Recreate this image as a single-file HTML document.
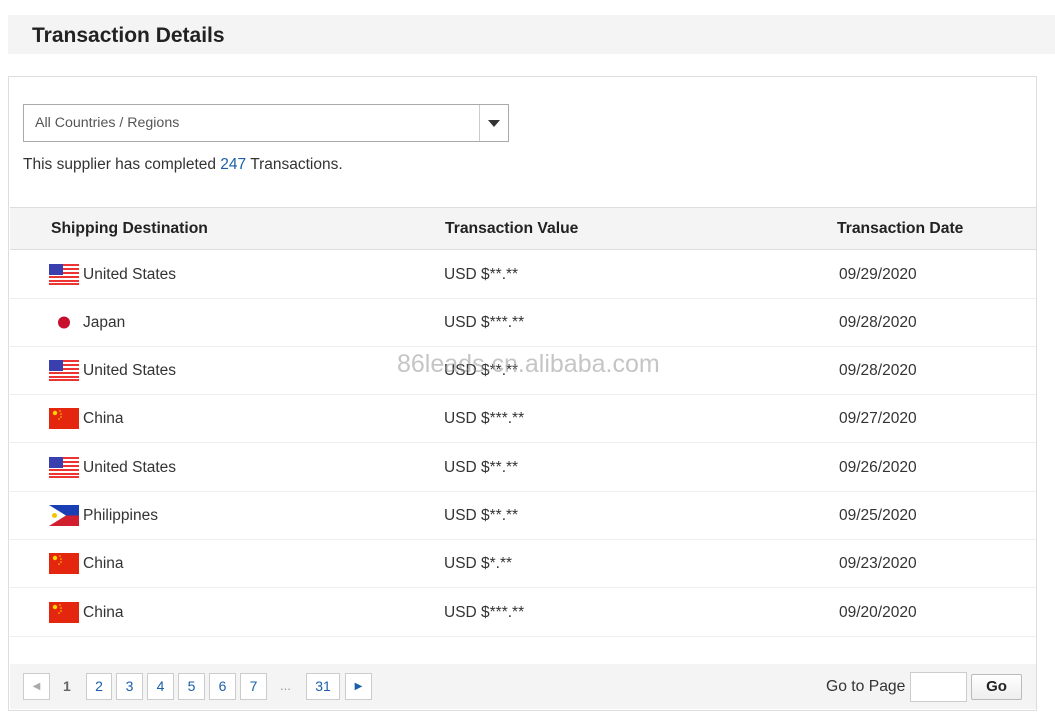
<!DOCTYPE html>
<html><head><meta charset="utf-8"><style>
*{margin:0;padding:0;box-sizing:border-box}
body{width:1055px;height:725px;background:#fff;font-family:"Liberation Sans",Arial,sans-serif;color:#333;position:relative;overflow:hidden}
.abs{position:absolute}
.hdr{left:8px;top:15px;width:1047px;height:39px;background:#f4f4f4}
.hdr span{position:absolute;left:24px;top:9px;font-size:21px;font-weight:bold;color:#222}
.card{left:8px;top:76px;width:1029px;height:635px;border:1px solid #ddd}
.sel{left:23px;top:104px;width:486px;height:38px;border:1px solid #aaa;background:#fff}
.sel span{position:absolute;left:11px;top:10px;font-size:14.2px;color:#555}
.sel i{position:absolute;right:0;top:0;width:29px;height:36px;border-left:1px solid #ccc}
.sel i:after{content:"";position:absolute;left:8px;top:15px;border-left:6px solid transparent;border-right:6px solid transparent;border-top:7px solid #333}
.info{left:23px;top:156px;font-size:15.5px;color:#333}
.info b{font-weight:normal;color:#1a5fa8}
.th{left:10px;top:207px;width:1026px;height:43px;background:#f4f4f4;border-top:1px solid #ddd;border-bottom:1px solid #ddd}
.th span{position:absolute;top:12px;font-size:15.7px;font-weight:bold;color:#222}
.row{left:10px;width:1026px;height:49px;border-bottom:1px solid #eee}
.row span{position:absolute;top:16px;font-size:15.5px;color:#333}
.flag{position:absolute;left:39px;top:14px;width:30px;height:21px}
.pg{left:10px;top:664px;width:1026px;height:45px;background:#f4f4f4}
.b{position:absolute;top:673px;height:27px;border:1px solid #ccc;background:#fff;color:#1a5fa8;font-size:14px;text-align:center;line-height:25px}
.wm{left:397px;top:350px;font-size:25px;color:rgba(150,150,150,.55)}
</style></head><body>
<div class="abs hdr"><span>Transaction Details</span></div>
<div class="abs card"></div>
<div class="abs sel"><span>All Countries / Regions</span><i></i></div>
<div class="abs info">This supplier has completed <b>247</b> Transactions.</div>
<div class="abs th"><span style="left:41px">Shipping Destination</span><span style="left:435px">Transaction Value</span><span style="left:827px">Transaction Date</span></div>

<svg width="0" height="0" style="position:absolute"><defs>
<g id="us"><rect width="30" height="21" fill="#fff"/><g fill="#e33"><rect y="0" width="30" height="2"/><rect y="4" width="30" height="2"/><rect y="8" width="30" height="2"/><rect y="12" width="30" height="2"/><rect y="16" width="30" height="2"/><rect y="19" width="30" height="2"/></g><rect width="14" height="11" fill="#3a3fb0"/></g>
<g id="cn"><rect width="30" height="21" fill="#e5260f"/><circle cx="6" cy="5" r="2.2" fill="#ffd700"/><circle cx="11" cy="3" r=".8" fill="#ffd700"/><circle cx="12" cy="6" r=".8" fill="#ffd700"/><circle cx="12" cy="9" r=".8" fill="#ffd700"/><circle cx="10" cy="11" r=".8" fill="#ffd700"/></g>
<g id="jp"><circle cx="15" cy="10.5" r="6" fill="#c8102e"/></g>
<g id="ph"><rect width="30" height="10.5" fill="#1a3fb5"/><rect y="10.5" width="30" height="10.5" fill="#d21f2f"/><polygon points="0,0 17,10.5 0,21" fill="#fff"/><circle cx="5.5" cy="10.5" r="2.5" fill="#f5c400"/></g>
</defs></svg>

<div class="abs row" style="top:250px"><svg class="flag"><use href="#us"/></svg><span style="left:73px">United States</span><span style="left:434px">USD $**.**</span><span style="left:829px">09/29/2020</span></div>
<div class="abs row" style="top:298px"><svg class="flag"><use href="#jp"/></svg><span style="left:73px">Japan</span><span style="left:434px">USD $***.**</span><span style="left:829px">09/28/2020</span></div>
<div class="abs row" style="top:346px"><svg class="flag"><use href="#us"/></svg><span style="left:73px">United States</span><span style="left:434px">USD $**.**</span><span style="left:829px">09/28/2020</span></div>
<div class="abs row" style="top:394px"><svg class="flag"><use href="#cn"/></svg><span style="left:73px">China</span><span style="left:434px">USD $***.**</span><span style="left:829px">09/27/2020</span></div>
<div class="abs row" style="top:443px"><svg class="flag"><use href="#us"/></svg><span style="left:73px">United States</span><span style="left:434px">USD $**.**</span><span style="left:829px">09/26/2020</span></div>
<div class="abs row" style="top:491px"><svg class="flag"><use href="#ph"/></svg><span style="left:73px">Philippines</span><span style="left:434px">USD $**.**</span><span style="left:829px">09/25/2020</span></div>
<div class="abs row" style="top:539px"><svg class="flag"><use href="#cn"/></svg><span style="left:73px">China</span><span style="left:434px">USD $*.**</span><span style="left:829px">09/23/2020</span></div>
<div class="abs row" style="top:588px"><svg class="flag"><use href="#cn"/></svg><span style="left:73px">China</span><span style="left:434px">USD $***.**</span><span style="left:829px">09/20/2020</span></div>

<div class="abs wm">86leads.cn.alibaba.com</div>

<div class="abs pg"></div>
<div class="b" style="left:23px;width:27px;color:#aaa;font-size:10px">&#9664;</div>
<div class="abs" style="left:63px;top:678px;font-size:14px;color:#666;font-weight:bold">1</div>
<div class="b" style="left:86px;width:26px">2</div>
<div class="b" style="left:116px;width:27px">3</div>
<div class="b" style="left:147px;width:27px">4</div>
<div class="b" style="left:178px;width:27px">5</div>
<div class="b" style="left:209px;width:27px">6</div>
<div class="b" style="left:240px;width:27px">7</div>
<div class="abs" style="left:280px;top:678px;font-size:13px;color:#999">...</div>
<div class="b" style="left:306px;width:34px">31</div>
<div class="b" style="left:345px;width:27px;font-size:10px">&#9654;</div>
<div class="abs" style="left:826px;top:678px;font-size:15.7px;color:#333">Go to Page</div>
<div class="abs" style="left:910px;top:672px;width:57px;height:30px;border:1px solid #ccc;background:#fff"></div>
<div class="abs" style="left:971px;top:674px;width:51px;height:26px;border:1px solid #bbb;border-radius:2px;background:linear-gradient(#fff,#eee);font-size:15px;font-weight:bold;color:#222;text-align:center;line-height:24px">Go</div>
</body></html>
